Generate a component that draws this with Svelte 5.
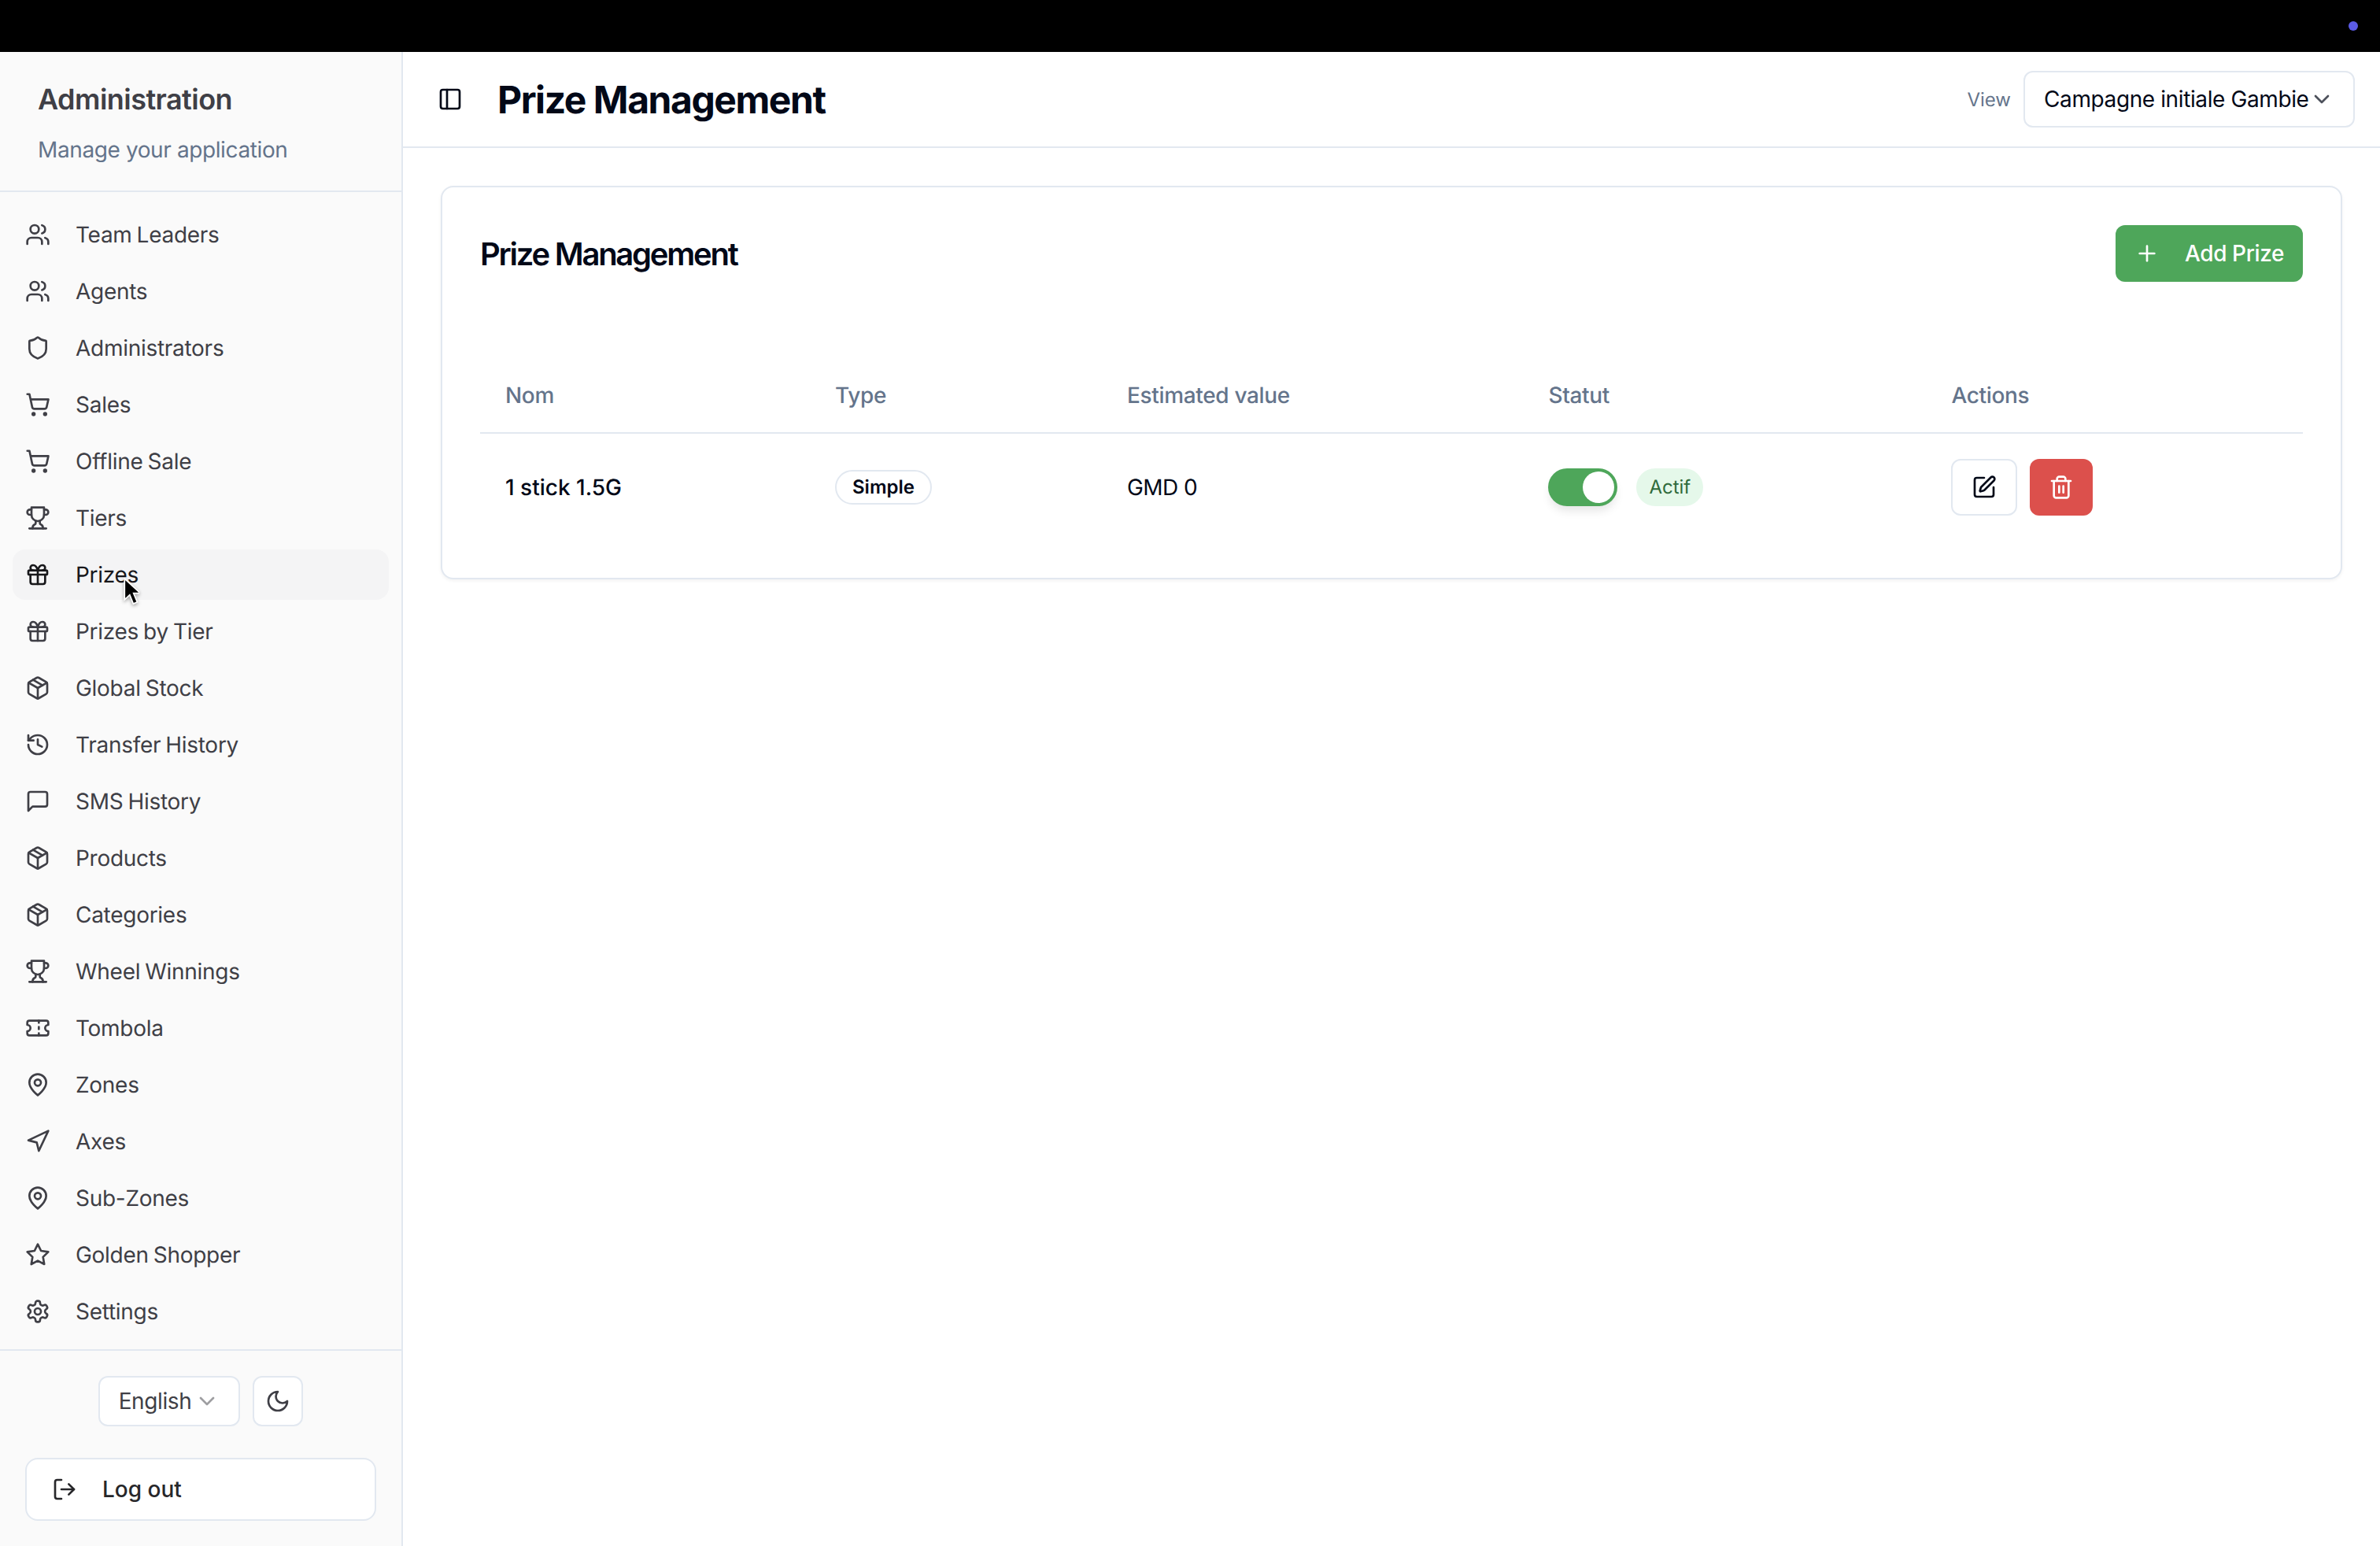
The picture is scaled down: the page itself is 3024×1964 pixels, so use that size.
<script>
  const icons = {
    users: '<path d="M16 21v-2a4 4 0 0 0-4-4H6a4 4 0 0 0-4 4v2"/><circle cx="9" cy="7" r="4"/><path d="M22 21v-2a4 4 0 0 0-3-3.87"/><path d="M16 3.13a4 4 0 0 1 0 7.75"/>',
    shield: '<path d="M20 13c0 5-3.5 7.5-7.66 8.95a1 1 0 0 1-.67-.01C7.5 20.5 4 18 4 13V6a1 1 0 0 1 1-1c2 0 4.5-1.2 6.24-2.72a1.17 1.17 0 0 1 1.52 0C14.51 3.81 17 5 19 5a1 1 0 0 1 1 1z"/>',
    cart: '<circle cx="8" cy="21" r="1"/><circle cx="19" cy="21" r="1"/><path d="M2.05 2.05h2l2.66 12.42a2 2 0 0 0 2 1.58h9.78a2 2 0 0 0 1.95-1.57l1.65-7.43H5.12"/>',
    trophy: '<path d="M6 9H4.5a2.5 2.5 0 0 1 0-5H6"/><path d="M18 9h1.5a2.5 2.5 0 0 0 0-5H18"/><path d="M4 22h16"/><path d="M10 14.66V17c0 .55-.47.98-.97 1.21C7.85 18.75 7 20.24 7 22"/><path d="M14 14.66V17c0 .55.47.98.97 1.21C16.15 18.75 17 20.24 17 22"/><path d="M18 2H6v7a6 6 0 0 0 12 0V2Z"/>',
    gift: '<rect x="3" y="8" width="18" height="4" rx="1"/><path d="M12 8v13"/><path d="M19 12v7a2 2 0 0 1-2 2H7a2 2 0 0 1-2-2v-7"/><path d="M7.5 8a2.5 2.5 0 0 1 0-5A4.8 8 0 0 1 12 8a4.8 8 0 0 1 4.5-5 2.5 2.5 0 0 1 0 5"/>',
    box: '<path d="m7.5 4.27 9 5.15"/><path d="M21 8a2 2 0 0 0-1-1.73l-7-4a2 2 0 0 0-2 0l-7 4A2 2 0 0 0 3 8v8a2 2 0 0 0 1 1.73l7 4a2 2 0 0 0 2 0l7-4A2 2 0 0 0 21 16Z"/><path d="m3.3 7 8.7 5 8.7-5"/><path d="M12 22V12"/>',
    history: '<path d="M3 12a9 9 0 1 0 9-9 9.75 9.75 0 0 0-6.74 2.74L3 8"/><path d="M3 3v5h5"/><path d="M12 7v5l4 2"/>',
    message: '<path d="M21 15a2 2 0 0 1-2 2H7l-4 4V5a2 2 0 0 1 2-2h14a2 2 0 0 1 2 2z"/>',
    ticket: '<path d="M2 9a3 3 0 0 1 0 6v2a2 2 0 0 0 2 2h16a2 2 0 0 0 2-2v-2a3 3 0 0 1 0-6V7a2 2 0 0 0-2-2H4a2 2 0 0 0-2 2Z"/><path d="M13 5v2"/><path d="M13 17v2"/><path d="M13 11v2"/>',
    pin: '<path d="M20 10c0 6-8 12-8 12s-8-6-8-12a8 8 0 0 1 16 0Z"/><circle cx="12" cy="10" r="3"/>',
    nav: '<polygon points="3 11 22 2 13 21 11 13 3 11"/>',
    star: '<polygon points="12 2 15.09 8.26 22 9.27 17 14.14 18.18 21.02 12 17.77 5.82 21.02 7 14.14 2 9.27 8.91 8.26 12 2"/>',
    settings: '<path d="M12.22 2h-.44a2 2 0 0 0-2 2v.18a2 2 0 0 1-1 1.73l-.43.25a2 2 0 0 1-2 0l-.15-.08a2 2 0 0 0-2.73.73l-.22.38a2 2 0 0 0 .73 2.73l.15.1a2 2 0 0 1 1 1.72v.51a2 2 0 0 1-1 1.74l-.15.09a2 2 0 0 0-.73 2.73l.22.38a2 2 0 0 0 2.73.73l.15-.08a2 2 0 0 1 2 0l.43.25a2 2 0 0 1 1 1.73V20a2 2 0 0 0 2 2h.44a2 2 0 0 0 2-2v-.18a2 2 0 0 1 1-1.73l.43-.25a2 2 0 0 1 2 0l.15.08a2 2 0 0 0 2.73-.73l.22-.39a2 2 0 0 0-.73-2.73l-.15-.08a2 2 0 0 1-1-1.74v-.5a2 2 0 0 1 1-1.74l.15-.09a2 2 0 0 0 .73-2.73l-.22-.38a2 2 0 0 0-2.73-.73l-.15.08a2 2 0 0 1-2 0l-.43-.25a2 2 0 0 1-1-1.73V4a2 2 0 0 0-2-2z"/><circle cx="12" cy="12" r="3"/>',
    moon: '<path d="M12 3a6 6 0 0 0 9 9 9 9 0 1 1-9-9Z"/>',
    logout: '<path d="M9 21H5a2 2 0 0 1-2-2V5a2 2 0 0 1 2-2h4"/><path d="m16 17 5-5-5-5"/><path d="M21 12H9"/>',
    chevron: '<path d="m6 9 6 6 6-6"/>',
    panel: '<rect x="3" y="3" width="18" height="18" rx="2"/><path d="M9 3v18"/>',
    plus: '<path d="M5 12h14"/><path d="M12 5v14"/>',
    pen: '<path d="M12 3H5a2 2 0 0 0-2 2v14a2 2 0 0 0 2 2h14a2 2 0 0 0 2-2v-7"/><path d="M18.375 2.625a1 1 0 0 1 3 3l-9.013 9.014a2 2 0 0 1-.853.505l-2.873.84a.5.5 0 0 1-.62-.62l.84-2.873a2 2 0 0 1 .506-.852z"/>',
    trash: '<path d="M3 6h18"/><path d="M19 6v14c0 1-1 2-2 2H7c-1 0-2-1-2-2V6"/><path d="M8 6V4c0-1 1-2 2-2h4c1 0 2 1 2 2v2"/><line x1="10" x2="10" y1="11" y2="17"/><line x1="14" x2="14" y1="11" y2="17"/>'
  };

  const navItems = [
    { label: "Team Leaders", icon: "users" },
    { label: "Agents", icon: "users" },
    { label: "Administrators", icon: "shield" },
    { label: "Sales", icon: "cart" },
    { label: "Offline Sale", icon: "cart" },
    { label: "Tiers", icon: "trophy" },
    { label: "Prizes", icon: "gift", active: true },
    { label: "Prizes by Tier", icon: "gift" },
    { label: "Global Stock", icon: "box" },
    { label: "Transfer History", icon: "history" },
    { label: "SMS History", icon: "message" },
    { label: "Products", icon: "box" },
    { label: "Categories", icon: "box" },
    { label: "Wheel Winnings", icon: "trophy" },
    { label: "Tombola", icon: "ticket" },
    { label: "Zones", icon: "pin" },
    { label: "Axes", icon: "nav" },
    { label: "Sub-Zones", icon: "pin" },
    { label: "Golden Shopper", icon: "star" },
    { label: "Settings", icon: "settings" }
  ];
</script>

{#snippet icon(name)}
  <svg class="icon" viewBox="0 0 24 24" fill="none" stroke="currentColor" stroke-width="2" stroke-linecap="round" stroke-linejoin="round">
    {@html icons[name]}
  </svg>
{/snippet}

<div class="shell">
  <div class="topbar"><span class="dot"></span></div>
  <div class="frame">
    <aside class="sidebar">
      <div class="brand">
        <h2>Administration</h2>
        <p>Manage your application</p>
      </div>
      <nav class="nav">
        {#each navItems as item}
          <a class="nav-item" class:active={item.active} href="#top">
            {@render icon(item.icon)}
            <span>{item.label}</span>
            {#if item.active}
              <svg class="pointer" viewBox="0 0 18 33">
                <path d="M1 1v24.5l6-5.6 4.2 10.4 4.6-2-4.3-10.2h8z" fill="#000" stroke="#fff" stroke-width="1.6" />
              </svg>
            {/if}
          </a>
        {/each}
      </nav>
      <div class="side-footer">
        <div class="prefs">
          <button class="outline lang">English <span class="muted">{@render icon("chevron")}</span></button>
          <button class="outline square">{@render icon("moon")}</button>
        </div>
        <button class="outline logout">{@render icon("logout")} Log out</button>
      </div>
    </aside>

    <main class="main">
      <header class="header">
        <span class="toggle-side">{@render icon("panel")}</span>
        <h1>Prize Management</h1>
        <div class="view">
          <span class="view-label">View</span>
          <button class="outline select">Campagne initiale Gambie <span class="chev">{@render icon("chevron")}</span></button>
        </div>
      </header>

      <div class="content">
        <section class="card">
          <div class="card-head">
            <h3>Prize Management</h3>
            <button class="add">{@render icon("plus")} Add Prize</button>
          </div>
          <div class="card-body">
            <table>
              <thead>
                <tr>
                  <th class="c-name">Nom</th>
                  <th class="c-type">Type</th>
                  <th class="c-value">Estimated value</th>
                  <th class="c-status">Statut</th>
                  <th>Actions</th>
                </tr>
              </thead>
              <tbody>
                <tr>
                  <td class="name">1 stick 1.5G</td>
                  <td><span class="badge">Simple</span></td>
                  <td class="value">GMD 0</td>
                  <td>
                    <div class="status">
                      <span class="switch"><span class="thumb"></span></span>
                      <span class="pill">Actif</span>
                    </div>
                  </td>
                  <td>
                    <div class="actions">
                      <button class="outline act edit">{@render icon("pen")}</button>
                      <button class="act del">{@render icon("trash")}</button>
                    </div>
                  </td>
                </tr>
              </tbody>
            </table>
          </div>
        </section>
      </div>
    </main>
  </div>
</div>

<style>
  :global(body) {
    margin: 0;
    background: #fff;
  }

  .shell {
    zoom: 2;
    width: 1512px;
    height: 982px;
    display: flex;
    flex-direction: column;
    overflow: hidden;
    font-family: Inter, "Liberation Sans", sans-serif;
    color: #020817;
    text-rendering: geometricPrecision;
    -webkit-font-smoothing: antialiased;
  }

  .topbar {
    flex: none;
    height: 33px;
    background: #000;
    display: flex;
    align-items: center;
    justify-content: flex-end;
    padding-right: 14px;
  }

  .dot {
    width: 6px;
    height: 6px;
    border-radius: 50%;
    background: #5b5be6;
  }

  .frame {
    flex: 1;
    display: flex;
    min-height: 0;
  }

  .icon {
    display: block;
    flex: none;
    width: 16px;
    height: 16px;
  }

  button {
    font: inherit;
    color: inherit;
    cursor: pointer;
  }

  .outline {
    background: #fff;
    border: 1px solid #e2e8f0;
    border-radius: 6px;
  }

  /* sidebar */
  .sidebar {
    flex: none;
    width: 256px;
    box-sizing: border-box;
    background: #fafafa;
    border-right: 1px solid #e2e8f0;
    display: flex;
    flex-direction: column;
  }

  .brand {
    padding: 16px 24px;
    border-bottom: 1px solid #e2e8f0;
  }

  .brand h2 {
    margin: 0;
    font-size: 18px;
    line-height: 28px;
    font-weight: 600;
    letter-spacing: -0.015em;
    color: #3f3f46;
  }

  .brand p {
    margin: 8px 0 0;
    font-size: 14px;
    line-height: 20px;
    letter-spacing: -0.014em;
    color: #64748b;
  }

  .nav {
    flex: 1;
    padding: 11px 8px 0;
    display: flex;
    flex-direction: column;
    gap: 4px;
  }

  .nav-item {
    position: relative;
    height: 32px;
    padding: 0 8px;
    display: flex;
    align-items: center;
    gap: 16px;
    border-radius: 8px;
    font-size: 14px;
    letter-spacing: -0.01em;
    word-spacing: -0.8px;
    color: #3f3f46;
    text-decoration: none;
  }

  .nav-item.active {
    background: #f4f4f5;
    color: #18181b;
  }

  .pointer {
    position: absolute;
    left: 70.5px;
    top: 18px;
    width: 10px;
    height: 18px;
    filter: drop-shadow(0 1px 1px rgba(0, 0, 0, 0.35));
  }

  .side-footer {
    border-top: 1px solid #e2e8f0;
    padding: 16px;
    display: flex;
    flex-direction: column;
    gap: 20px;
  }

  .prefs {
    display: flex;
    justify-content: center;
    gap: 8px;
  }

  .lang {
    height: 32px;
    padding: 0 12px;
    display: flex;
    align-items: center;
    gap: 2px;
    font-size: 14px;
    letter-spacing: -0.014em;
    color: #3f3f46;
  }

  .muted {
    opacity: 0.5;
  }

  .square {
    width: 32px;
    height: 32px;
    padding: 0;
    display: flex;
    align-items: center;
    justify-content: center;
    color: #3f3f46;
  }

  .logout {
    height: 40px;
    padding: 0 16px;
    display: flex;
    align-items: center;
    gap: 16px;
    border-radius: 8px;
    font-size: 14px;
    font-weight: 500;
    color: #27272a;
  }

  /* main */
  .main {
    flex: 1;
    min-width: 0;
    display: flex;
    flex-direction: column;
  }

  .header {
    flex: none;
    height: 60px;
    border-bottom: 1px solid #e2e8f0;
    display: flex;
    align-items: center;
    padding: 0 16px 0 22px;
    gap: 22px;
  }

  .toggle-side {
    color: #020817;
  }

  .header h1 {
    margin: 0;
    padding-top: 1px;
    font-size: 24px;
    line-height: 32px;
    font-weight: 700;
    letter-spacing: -0.03em;
  }

  .view {
    margin-left: auto;
    display: flex;
    align-items: center;
    gap: 8px;
  }

  .view-label {
    font-size: 12px;
    color: #64748b;
  }

  .select {
    width: 210.5px;
    height: 36px;
    padding: 0 12px;
    display: flex;
    align-items: center;
    gap: 0;
    font-size: 14px;
    letter-spacing: -0.014em;
    white-space: nowrap;
  }

  .chev {
    opacity: 0.7;
  }

  .content {
    padding: 24px;
  }

  .card {
    border: 1px solid #e2e8f0;
    border-radius: 8px;
    background: #fff;
    box-shadow: 0 1px 2px rgba(0, 0, 0, 0.05);
  }

  .card-head {
    padding: 24px;
    display: flex;
    align-items: center;
    justify-content: space-between;
  }

  .card-head h3 {
    margin: 0;
    padding-top: 1px;
    font-size: 20px;
    line-height: 28px;
    font-weight: 600;
    letter-spacing: -0.056em;
  }

  .add {
    height: 36px;
    padding: 0 12px;
    display: flex;
    align-items: center;
    gap: 16px;
    border: 0;
    border-radius: 6px;
    background: #4ea65a;
    color: #fff;
    font-size: 14px;
    font-weight: 500;
    letter-spacing: -0.014em;
  }

  .card-body {
    padding: 24px;
  }

  table {
    width: 100%;
    table-layout: fixed;
    border-collapse: collapse;
    font-size: 14px;
  }

  th {
    height: 48px;
    padding: 0 16px;
    box-sizing: border-box;
    text-align: left;
    font-weight: 500;
    letter-spacing: -0.012em;
    color: #64748b;
    border-bottom: 1px solid #e2e8f0;
  }

  .c-name { width: 209.5px; }
  .c-type { width: 185.5px; }
  .c-value { width: 267.7px; }
  .c-status { width: 256px; }

  td {
    height: 67.5px;
    padding: 15.75px 16px;
    box-sizing: border-box;
    vertical-align: middle;
  }

  .name {
    font-weight: 500;
  }

  .value {
    letter-spacing: -0.02em;
  }

  .badge {
    display: inline-block;
    padding: 2px 10px;
    border: 1px solid #e2e8f0;
    border-radius: 999px;
    font-size: 12px;
    line-height: 16px;
    font-weight: 600;
  }

  .status {
    display: flex;
    align-items: center;
    gap: 12px;
  }

  .switch {
    width: 44px;
    height: 24px;
    box-sizing: border-box;
    padding: 2px;
    border-radius: 999px;
    background: #4ea65a;
    display: flex;
    justify-content: flex-end;
    box-shadow: 0 4px 6px -1px rgba(0, 0, 0, 0.1);
  }

  .thumb {
    width: 20px;
    height: 20px;
    border-radius: 50%;
    background: #fff;
  }

  .pill {
    height: 24px;
    padding: 0 8px;
    display: flex;
    align-items: center;
    border-radius: 999px;
    background: #e5f8ea;
    color: #2f6b3c;
    font-size: 12px;
  }

  .actions {
    display: flex;
    gap: 8px;
  }

  .act {
    height: 36px;
    padding: 0 12px;
    display: flex;
    align-items: center;
    border-radius: 6px;
  }

  .del {
    border: 0;
    background: #dc504c;
    color: #fff;
  }
</style>
